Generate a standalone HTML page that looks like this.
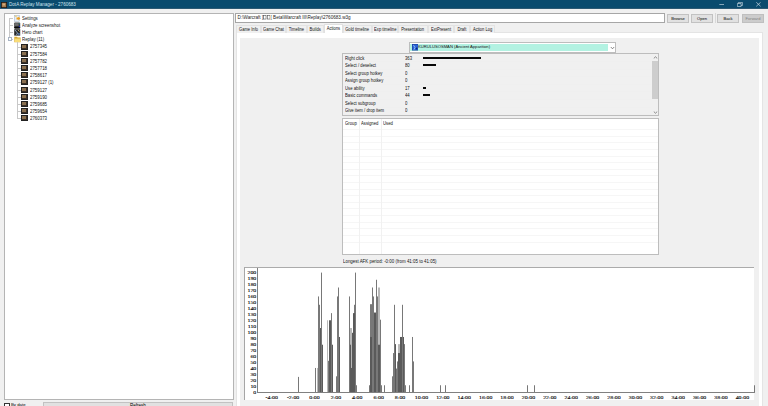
<!DOCTYPE html>
<html><head><meta charset="utf-8">
<style>
*{box-sizing:border-box;margin:0;padding:0}
html,body{width:768px;height:406px;overflow:hidden;background:#f0f0f0;font-family:"Liberation Sans",sans-serif;font-size:4.3px;color:#000;position:relative}
.a{position:absolute}
#title{left:0;top:0;width:768px;height:8px;background:#0a4b6e;color:#cfe3ef}
#tree{left:4px;top:13px;width:230px;height:387px;background:#fff;border:1px solid #b4b4b4}
.ti{position:absolute;white-space:nowrap;line-height:6px;height:6px;font-size:4.5px;color:#111;transform:scaleX(0.97);transform-origin:0 0}
.btn{position:absolute;background:#e1e1e1;border:1px solid #c2c2c2;text-align:center;line-height:7px;font-size:4.1px}
.tab{position:absolute;top:25px;height:8px;background:#f0f0f0;border:1px solid #e3e3e3;border-bottom:none;text-align:center;line-height:7px;font-size:4.5px;white-space:nowrap;color:#111}
.tab span{display:inline-block;transform:scaleX(0.91)}
.lrow{position:absolute;white-space:nowrap;line-height:6px;height:6px;font-size:4.5px;color:#111;transform:scaleX(0.94);transform-origin:0 0}
svg text{font-family:"Liberation Serif",serif;font-size:5.9px;fill:#000;stroke:#000;stroke-width:0.12px}
</style></head><body>
<div id="title" class="a">
  <div class="a" style="left:0;top:8px;width:768px;height:1px;background:#0b3f5e;opacity:0.85"></div>
  <svg class="a" style="left:1px;top:1.5px" width="6" height="6" viewBox="0 0 6 6"><rect x="0" y="0" width="6" height="6" fill="#1e1a14"/><rect x="0.8" y="0.8" width="4.4" height="4.4" fill="#a07a50"/><rect x="1.5" y="1.5" width="2.5" height="2" fill="#d0a878"/></svg>
  <div class="a" style="left:9px;top:1.2px;font-size:4.6px;line-height:7px;white-space:nowrap">DotA Replay Manager - 2760683</div>
  <svg class="a" style="left:719px;top:3px" width="6" height="3" viewBox="0 0 6 3"><path d="M0.3 1.5H5" stroke="#d8e4ec" stroke-width="0.6"/></svg>
  <svg class="a" style="left:736.5px;top:1.8px" width="6" height="5" viewBox="0 0 6 5"><path d="M0.4 1.5H4.1V4.5H0.4Z M1.4 1.5V0.4H5.4V3.5H4.1" stroke="#d8e4ec" stroke-width="0.6" fill="none"/></svg>
  <svg class="a" style="left:755.5px;top:1.8px" width="5" height="5" viewBox="0 0 5 5"><path d="M0.3 0.3L4.6 4.3M4.6 0.3L0.3 4.3" stroke="#d8e4ec" stroke-width="0.65"/></svg>
</div>

<div id="tree" class="a"></div>
<svg class="a" style="left:14px;top:15px" width="7" height="7" viewBox="0 0 7 7"><rect x="0.3" y="0.3" width="5" height="6.2" fill="#e4eef8" stroke="#9fb0c4" stroke-width="0.5"/><rect x="0.8" y="0.6" width="2" height="1.2" fill="#f0d070"/><path d="M2.5 2.6H4.3V1.6L6.4 3.6L4.3 5.6V4.6H2.5Z" fill="#eea020"/></svg>
<div class="ti" style="left:22px;top:15.7px">Settings</div>
<div class="a" style="left:9px;top:17.9px;width:4px;height:0;background:#c8c8c8;height:1px;border:none"></div>
<svg class="a" style="left:14px;top:22px" width="7" height="7" viewBox="0 0 7 7"><rect x="0.2" y="0.6" width="6" height="5.8" rx="0.8" fill="#3c3c3c"/><rect x="0.8" y="1.2" width="3.8" height="2.6" fill="#707070"/><rect x="0.2" y="4.8" width="6" height="1.6" rx="0.6" fill="#050505"/><rect x="4.8" y="1.2" width="1" height="1" fill="#2a8a8a"/><rect x="4.8" y="3.8" width="1.2" height="1.4" fill="#2030b0"/></svg>
<div class="ti" style="left:22px;top:22.8px">Analyze screenshot</div>
<div class="a" style="left:9px;top:25.0px;width:4px;height:0;background:#c8c8c8;height:1px;border:none"></div>
<svg class="a" style="left:14px;top:29px" width="7" height="7" viewBox="0 0 7 7"><rect x="0.2" y="0.2" width="6" height="6.4" fill="#2a2a2a"/><path d="M1 1L3.5 4L2.5 6" stroke="#9ab0c8" stroke-width="0.9" fill="none"/><path d="M4 1L5.5 2.5" stroke="#d8c070" stroke-width="0.8"/><rect x="4" y="4" width="1.8" height="2" fill="#4a6a9a"/></svg>
<div class="ti" style="left:22px;top:29.9px">Hero chart</div>
<div class="a" style="left:9px;top:32.1px;width:4px;height:0;background:#c8c8c8;height:1px;border:none"></div>
<svg class="a" style="left:14px;top:36px" width="8" height="7" viewBox="0 0 8 7"><path d="M0.3 0.8H3L3.6 1.5H6.6V6.2H0.3Z" fill="#d8a830"/><path d="M0.6 2.4H6.8L6.3 6H0.6Z" fill="#f8dc78"/></svg>
<div class="ti" style="left:22px;top:37.0px">Replay (11)</div>
<div class="a" style="left:9px;top:39.2px;width:4px;height:0;background:#c8c8c8;height:1px;border:none"></div>
<div class="a" style="left:9px;top:18px;width:0;height:21px;background:#c8c8c8;width:1px;border:none"></div>
<div class="a" style="left:8px;top:37px;width:4px;height:4px;background:#fff;border:1px solid #a8b4c4"></div>
<div class="a" style="left:21px;top:44px;width:7px;height:6px;background:#3b3026;border:1px solid #222"></div><div class="a" style="left:22px;top:45px;width:4px;height:3px;background:#8a7050"></div>
<div class="ti" style="left:29.7px;top:44.4px">2757345</div>
<div class="a" style="left:17px;top:46.5px;width:4px;height:0;background:#c8c8c8;height:1px;border:none"></div>
<div class="a" style="left:21px;top:51px;width:7px;height:6px;background:#3b3026;border:1px solid #222"></div><div class="a" style="left:22px;top:52px;width:4px;height:3px;background:#8a7050"></div>
<div class="ti" style="left:29.7px;top:51.6px">2757584</div>
<div class="a" style="left:17px;top:53.7px;width:4px;height:0;background:#c8c8c8;height:1px;border:none"></div>
<div class="a" style="left:21px;top:58px;width:7px;height:6px;background:#3b3026;border:1px solid #222"></div><div class="a" style="left:22px;top:59px;width:4px;height:3px;background:#8a7050"></div>
<div class="ti" style="left:29.7px;top:58.8px">2757782</div>
<div class="a" style="left:17px;top:60.9px;width:4px;height:0;background:#c8c8c8;height:1px;border:none"></div>
<div class="a" style="left:21px;top:65px;width:7px;height:6px;background:#3b3026;border:1px solid #222"></div><div class="a" style="left:22px;top:66px;width:4px;height:3px;background:#8a7050"></div>
<div class="ti" style="left:29.7px;top:65.9px">2757718</div>
<div class="a" style="left:17px;top:68.0px;width:4px;height:0;background:#c8c8c8;height:1px;border:none"></div>
<div class="a" style="left:21px;top:72px;width:7px;height:6px;background:#3b3026;border:1px solid #222"></div><div class="a" style="left:22px;top:73px;width:4px;height:3px;background:#8a7050"></div>
<div class="ti" style="left:29.7px;top:73.1px">2758617</div>
<div class="a" style="left:17px;top:75.2px;width:4px;height:0;background:#c8c8c8;height:1px;border:none"></div>
<div class="a" style="left:21px;top:79px;width:7px;height:6px;background:#3b3026;border:1px solid #222"></div><div class="a" style="left:22px;top:80px;width:4px;height:3px;background:#8a7050"></div>
<div class="ti" style="left:29.7px;top:80.3px">2759127 (1)</div>
<div class="a" style="left:17px;top:82.4px;width:4px;height:0;background:#c8c8c8;height:1px;border:none"></div>
<div class="a" style="left:21px;top:87px;width:7px;height:6px;background:#3b3026;border:1px solid #222"></div><div class="a" style="left:22px;top:88px;width:4px;height:3px;background:#8a7050"></div>
<div class="ti" style="left:29.7px;top:87.5px">2759127</div>
<div class="a" style="left:17px;top:89.6px;width:4px;height:0;background:#c8c8c8;height:1px;border:none"></div>
<div class="a" style="left:21px;top:94px;width:7px;height:6px;background:#3b3026;border:1px solid #222"></div><div class="a" style="left:22px;top:95px;width:4px;height:3px;background:#8a7050"></div>
<div class="ti" style="left:29.7px;top:94.7px">2759190</div>
<div class="a" style="left:17px;top:96.8px;width:4px;height:0;background:#c8c8c8;height:1px;border:none"></div>
<div class="a" style="left:21px;top:101px;width:7px;height:6px;background:#3b3026;border:1px solid #222"></div><div class="a" style="left:22px;top:102px;width:4px;height:3px;background:#8a7050"></div>
<div class="ti" style="left:29.7px;top:101.8px">2759685</div>
<div class="a" style="left:17px;top:103.9px;width:4px;height:0;background:#c8c8c8;height:1px;border:none"></div>
<div class="a" style="left:21px;top:108px;width:7px;height:6px;background:#3b3026;border:1px solid #222"></div><div class="a" style="left:22px;top:109px;width:4px;height:3px;background:#8a7050"></div>
<div class="ti" style="left:29.7px;top:109.0px">2759654</div>
<div class="a" style="left:17px;top:111.1px;width:4px;height:0;background:#c8c8c8;height:1px;border:none"></div>
<div class="a" style="left:21px;top:115px;width:7px;height:6px;background:#3b3026;border:1px solid #222"></div><div class="a" style="left:22px;top:116px;width:4px;height:3px;background:#8a7050"></div>
<div class="ti" style="left:29.7px;top:116.2px">2760373</div>
<div class="a" style="left:17px;top:118.3px;width:4px;height:0;background:#c8c8c8;height:1px;border:none"></div>
<div class="a" style="left:17px;top:42px;width:0;height:76.3px;background:#c8c8c8;width:1px;border:none"></div>

<!-- address bar + buttons -->
<div class="a" style="left:235px;top:13px;width:430px;height:10px;background:#fff;border:1px solid #a6a6a6"></div>
<div class="a" style="left:237.6px;top:15px;font-size:4.6px;line-height:6px;white-space:nowrap;color:#222">D:\Warcraft ]<svg width="3.4" height="4.4" viewBox="0 0 3.4 4.4" style="vertical-align:-0.5px;margin:0 0.15px"><rect x="0.35" y="0.35" width="2.7" height="3.7" fill="none" stroke="#444" stroke-width="0.55"/></svg><svg width="3.4" height="4.4" viewBox="0 0 3.4 4.4" style="vertical-align:-0.5px;margin:0 0.15px"><rect x="0.35" y="0.35" width="2.7" height="3.7" fill="none" stroke="#444" stroke-width="0.55"/></svg>[ Beta\Warcraft III\Replay\2760683.w3g</div>
<div class="btn" style="left:667px;top:14px;width:22px;height:9px">Browse</div>
<div class="btn" style="left:691px;top:14px;width:22px;height:9px">Open</div>
<div class="a" style="left:715px;top:13px;width:1px;height:10px;background:#d8d8d8"></div>
<div class="btn" style="left:717px;top:14px;width:22px;height:9px">Back</div>
<div class="btn" style="left:742px;top:14px;width:22px;height:9px;background:#cccccc;border-color:#bfbfbf;color:#838383">Forward</div>

<!-- tab page -->
<div class="a" style="left:236px;top:32px;width:527px;height:380px;background:#fff;border:1px solid #e4e4e4"></div>
<div class="tab" style="left:236px;width:25px"><span>Game Info</span></div>
<div class="tab" style="left:261px;width:25px"><span>Game Chat</span></div>
<div class="tab" style="left:286px;width:21px"><span>Timeline</span></div>
<div class="tab" style="left:307px;width:17px"><span>Builds</span></div>
<div class="tab" style="left:324px;top:24px;width:19px;height:9px;background:#fff;border-color:#e0e0e0"><span>Actions</span></div>
<div class="tab" style="left:343px;width:29px"><span>Gold timeline</span></div>
<div class="tab" style="left:372px;width:26px"><span>Exp timeline</span></div>
<div class="tab" style="left:398px;width:30px"><span>Presentation</span></div>
<div class="tab" style="left:428px;width:26px"><span>ExtPresent</span></div>
<div class="tab" style="left:454px;width:16px"><span>Draft</span></div>
<div class="tab" style="left:470px;width:25px"><span>Action Log</span></div>

<div class="a" style="left:240px;top:38px;width:519px;height:370px;background:#f0f0f0"></div>

<!-- combobox -->
<div class="a" style="left:409px;top:42px;width:207px;height:10.5px;background:#fff;border:1px solid #bdbdbd"></div>
<div class="a" style="left:410px;top:43.5px;width:198px;height:7.5px;background:#b3f2e2"></div>
<svg class="a" style="left:411.5px;top:44px" width="6.5" height="6.5" viewBox="0 0 6.5 6.5"><rect x="0" y="0" width="6.5" height="6.5" fill="#1c3c9c"/><rect x="0.6" y="0.6" width="5.3" height="5.3" fill="#2a64d8"/><path d="M1.5 1.2L3 3.5L2 5.6" stroke="#a8d0f8" stroke-width="0.8" fill="none"/><rect x="3.8" y="3.6" width="1.6" height="1.8" fill="#0c2a80"/></svg>
<div class="a" style="left:418.4px;top:44.4px;font-size:4.4px;line-height:6px;white-space:nowrap;color:#111;transform:scaleX(0.94);transform-origin:0 0">KURULUSOSMAN (Ancient Apparition)</div>
<svg class="a" style="left:610px;top:46px" width="5" height="4" viewBox="0 0 5 4"><path d="M0.8 1L2.5 2.8L4.2 1" stroke="#555" stroke-width="0.7" fill="none"/></svg>

<!-- list box -->
<div class="a" style="left:342px;top:53px;width:317px;height:63px;background:#f0f0f0;border:1px solid #bdbdbd"></div>
<div class="a" style="left:343px;top:61.3px;width:308px;height:1px;background:#efefef"></div>
<div class="a" style="left:343px;top:68.8px;width:308px;height:1px;background:#efefef"></div>
<div class="a" style="left:343px;top:76.4px;width:308px;height:1px;background:#efefef"></div>
<div class="a" style="left:343px;top:83.9px;width:308px;height:1px;background:#efefef"></div>
<div class="a" style="left:343px;top:91.4px;width:308px;height:1px;background:#efefef"></div>
<div class="a" style="left:343px;top:98.9px;width:308px;height:1px;background:#efefef"></div>
<div class="a" style="left:343px;top:106.5px;width:308px;height:1px;background:#efefef"></div>
<div class="a" style="left:343px;top:114.0px;width:308px;height:1px;background:#efefef"></div>
<div class="lrow" style="left:345px;top:55.6px">Right click</div>
<div class="lrow" style="left:404.7px;top:55.6px">363</div>
<div class="a" style="left:423.3px;top:57px;width:57.9px;height:2px;background:#080808"></div>
<div class="lrow" style="left:345px;top:63.1px">Select / deselect</div>
<div class="lrow" style="left:404.7px;top:63.1px">80</div>
<div class="a" style="left:423.3px;top:64px;width:12.8px;height:2px;background:#080808"></div>
<div class="lrow" style="left:345px;top:70.7px">Select group hotkey</div>
<div class="lrow" style="left:404.7px;top:70.7px">0</div>
<div class="lrow" style="left:345px;top:78.2px">Assign group hotkey</div>
<div class="lrow" style="left:404.7px;top:78.2px">0</div>
<div class="lrow" style="left:345px;top:85.7px">Use ability</div>
<div class="lrow" style="left:404.7px;top:85.7px">17</div>
<div class="a" style="left:423.3px;top:87px;width:2.7px;height:2px;background:#080808"></div>
<div class="lrow" style="left:345px;top:93.2px">Basic commands</div>
<div class="lrow" style="left:404.7px;top:93.2px">44</div>
<div class="a" style="left:423.3px;top:94px;width:7.0px;height:2px;background:#080808"></div>
<div class="lrow" style="left:345px;top:100.8px">Select subgroup</div>
<div class="lrow" style="left:404.7px;top:100.8px">0</div>
<div class="lrow" style="left:345px;top:108.3px">Give item / drop item</div>
<div class="lrow" style="left:404.7px;top:108.3px">0</div>
<div class="a" style="left:651.5px;top:54px;width:6.5px;height:61px;background:#f0f0f0"></div>
<div class="a" style="left:652px;top:60.7px;width:5.8px;height:38px;background:#cdcdcd"></div>
<svg class="a" style="left:652.5px;top:56px" width="5" height="3" viewBox="0 0 5 3"><path d="M0.8 2.4L2.5 0.8L4.2 2.4" stroke="#606060" stroke-width="0.7" fill="none"/></svg>
<svg class="a" style="left:652.5px;top:111px" width="5" height="3" viewBox="0 0 5 3"><path d="M0.8 0.6L2.5 2.2L4.2 0.6" stroke="#606060" stroke-width="0.7" fill="none"/></svg>

<!-- group panel -->
<div class="a" style="left:342px;top:118px;width:317px;height:137px;background:#fff;border:1px solid #bdbdbd"></div>
<div class="a" style="left:343px;top:129.0px;width:315px;height:1px;background:#f6f6f6"></div>
<div class="a" style="left:343px;top:135.6px;width:315px;height:1px;background:#f6f6f6"></div>
<div class="a" style="left:343px;top:142.2px;width:315px;height:1px;background:#f6f6f6"></div>
<div class="a" style="left:343px;top:148.9px;width:315px;height:1px;background:#f6f6f6"></div>
<div class="a" style="left:343px;top:155.5px;width:315px;height:1px;background:#f6f6f6"></div>
<div class="a" style="left:343px;top:162.1px;width:315px;height:1px;background:#f6f6f6"></div>
<div class="a" style="left:343px;top:168.7px;width:315px;height:1px;background:#f6f6f6"></div>
<div class="a" style="left:343px;top:175.3px;width:315px;height:1px;background:#f6f6f6"></div>
<div class="a" style="left:343px;top:182.0px;width:315px;height:1px;background:#f6f6f6"></div>
<div class="a" style="left:343px;top:188.6px;width:315px;height:1px;background:#f6f6f6"></div>
<div class="a" style="left:343px;top:195.2px;width:315px;height:1px;background:#f6f6f6"></div>
<div class="a" style="left:343px;top:201.8px;width:315px;height:1px;background:#f6f6f6"></div>
<div class="a" style="left:343px;top:208.4px;width:315px;height:1px;background:#f6f6f6"></div>
<div class="a" style="left:343px;top:215.1px;width:315px;height:1px;background:#f6f6f6"></div>
<div class="a" style="left:343px;top:221.7px;width:315px;height:1px;background:#f6f6f6"></div>
<div class="a" style="left:343px;top:228.3px;width:315px;height:1px;background:#f6f6f6"></div>
<div class="a" style="left:343px;top:234.9px;width:315px;height:1px;background:#f6f6f6"></div>
<div class="a" style="left:343px;top:241.5px;width:315px;height:1px;background:#f6f6f6"></div>
<div class="a" style="left:359px;top:119px;width:1px;height:135px;background:#f1f1f1"></div>
<div class="a" style="left:381px;top:119px;width:1px;height:135px;background:#f1f1f1"></div>
<div class="lrow" style="left:345px;top:121.3px">Group</div>
<div class="lrow" style="left:361.2px;top:121.3px">Assigned</div>
<div class="lrow" style="left:382.9px;top:121.3px">Used</div>
<div class="a" style="left:343px;top:258.9px;font-size:4.7px;line-height:6px;white-space:nowrap;color:#111;transform:scaleX(0.94);transform-origin:0 0">Longest AFK period: -0:00 (from 41:05 to 41:05)</div>

<!-- chart -->
<div class="a" style="left:244px;top:267px;width:510px;height:133px;background:#fff;border-top:1px solid #ababab;border-left:1px solid #a6a6a6"></div>
<svg class="a" style="left:0;top:0" width="768" height="406" viewBox="0 0 768 406">
<rect x="298" y="376.90" width="1" height="15.50" fill="#787878"/>
<rect x="315" y="367.96" width="1" height="24.44" fill="#787878"/>
<rect x="317" y="367.96" width="1" height="24.44" fill="#b8b8b8"/>
<rect x="318" y="296.44" width="1" height="95.96" fill="#787878"/>
<rect x="319" y="304.79" width="1" height="87.61" fill="#787878"/>
<rect x="320" y="328.03" width="1" height="64.37" fill="#5a5a5a"/>
<rect x="321" y="272.60" width="1" height="119.80" fill="#787878"/>
<rect x="322" y="344.72" width="1" height="47.68" fill="#5a5a5a"/>
<rect x="327" y="320.28" width="1" height="72.12" fill="#b8b8b8"/>
<rect x="328" y="360.81" width="1" height="31.59" fill="#787878"/>
<rect x="329" y="320.28" width="1" height="72.12" fill="#5a5a5a"/>
<rect x="330" y="320.28" width="1" height="72.12" fill="#5a5a5a"/>
<rect x="331" y="313.13" width="1" height="79.27" fill="#787878"/>
<rect x="332" y="344.72" width="1" height="47.68" fill="#5a5a5a"/>
<rect x="336" y="376.31" width="1" height="16.09" fill="#787878"/>
<rect x="337" y="296.44" width="1" height="95.96" fill="#787878"/>
<rect x="338" y="287.50" width="1" height="104.90" fill="#787878"/>
<rect x="339" y="336.97" width="1" height="55.43" fill="#5a5a5a"/>
<rect x="349" y="296.44" width="1" height="95.96" fill="#787878"/>
<rect x="350" y="328.03" width="1" height="64.37" fill="#b8b8b8"/>
<rect x="350" y="344.72" width="1" height="47.68" fill="#5a5a5a"/>
<rect x="351" y="328.03" width="1" height="64.37" fill="#b8b8b8"/>
<rect x="351" y="367.96" width="1" height="24.44" fill="#5a5a5a"/>
<rect x="352" y="332.80" width="1" height="59.60" fill="#5a5a5a"/>
<rect x="353" y="313.13" width="1" height="79.27" fill="#5a5a5a"/>
<rect x="354" y="304.79" width="1" height="87.61" fill="#787878"/>
<rect x="354" y="313.13" width="1" height="79.27" fill="#5a5a5a"/>
<rect x="355" y="272.60" width="1" height="119.80" fill="#787878"/>
<rect x="356" y="385.25" width="1" height="7.15" fill="#787878"/>
<rect x="369" y="385.25" width="1" height="7.15" fill="#787878"/>
<rect x="370" y="304.19" width="1" height="88.21" fill="#787878"/>
<rect x="370" y="336.97" width="1" height="55.43" fill="#5a5a5a"/>
<rect x="371" y="304.19" width="1" height="88.21" fill="#787878"/>
<rect x="371" y="336.97" width="1" height="55.43" fill="#5a5a5a"/>
<rect x="372" y="287.50" width="1" height="104.90" fill="#787878"/>
<rect x="373" y="296.44" width="1" height="95.96" fill="#787878"/>
<rect x="374" y="312.54" width="1" height="79.86" fill="#5a5a5a"/>
<rect x="375" y="312.54" width="1" height="79.86" fill="#5a5a5a"/>
<rect x="376" y="279.76" width="1" height="112.64" fill="#787878"/>
<rect x="377" y="296.44" width="1" height="95.96" fill="#787878"/>
<rect x="378" y="287.50" width="1" height="104.90" fill="#b8b8b8"/>
<rect x="378" y="344.72" width="1" height="47.68" fill="#5a5a5a"/>
<rect x="379" y="287.50" width="1" height="104.90" fill="#b8b8b8"/>
<rect x="379" y="344.72" width="1" height="47.68" fill="#5a5a5a"/>
<rect x="380" y="319.69" width="1" height="72.71" fill="#787878"/>
<rect x="381" y="385.25" width="1" height="7.15" fill="#787878"/>
<rect x="384" y="385.25" width="1" height="7.15" fill="#787878"/>
<rect x="392" y="376.31" width="1" height="16.09" fill="#787878"/>
<rect x="393" y="353.06" width="1" height="39.34" fill="#787878"/>
<rect x="394" y="304.79" width="1" height="87.61" fill="#787878"/>
<rect x="395" y="344.12" width="1" height="48.28" fill="#5a5a5a"/>
<rect x="396" y="368.56" width="1" height="23.84" fill="#787878"/>
<rect x="397" y="361.41" width="1" height="30.99" fill="#787878"/>
<rect x="398" y="344.12" width="1" height="48.28" fill="#b8b8b8"/>
<rect x="398" y="353.06" width="1" height="39.34" fill="#5a5a5a"/>
<rect x="399" y="344.12" width="1" height="48.28" fill="#b8b8b8"/>
<rect x="399" y="353.06" width="1" height="39.34" fill="#5a5a5a"/>
<rect x="400" y="336.97" width="1" height="55.43" fill="#5a5a5a"/>
<rect x="401" y="336.97" width="1" height="55.43" fill="#5a5a5a"/>
<rect x="402" y="304.79" width="1" height="87.61" fill="#787878"/>
<rect x="403" y="336.97" width="1" height="55.43" fill="#5a5a5a"/>
<rect x="404" y="344.12" width="1" height="48.28" fill="#787878"/>
<rect x="405" y="385.25" width="1" height="7.15" fill="#787878"/>
<rect x="409" y="385.25" width="1" height="7.15" fill="#787878"/>
<rect x="412" y="336.97" width="1" height="55.43" fill="#787878"/>
<rect x="413" y="361.41" width="1" height="30.99" fill="#787878"/>
<rect x="440" y="385.25" width="1" height="7.15" fill="#787878"/>
<rect x="445" y="385.25" width="1" height="7.15" fill="#787878"/>
<rect x="527" y="385.25" width="1" height="7.15" fill="#787878"/>
<rect x="534" y="385.25" width="1" height="7.15" fill="#787878"/>
<rect x="754" y="385.25" width="1" height="7.15" fill="#787878"/>
<rect x="257" y="268" width="1" height="125" fill="#808080"/>
<rect x="257" y="392" width="498" height="1" fill="#808080"/>
<text transform="translate(256.3,273.60) scale(1,0.72)" text-anchor="end">200</text>
<text transform="translate(256.3,279.60) scale(1,0.72)" text-anchor="end">190</text>
<text transform="translate(256.3,285.60) scale(1,0.72)" text-anchor="end">180</text>
<text transform="translate(256.3,291.60) scale(1,0.72)" text-anchor="end">170</text>
<text transform="translate(256.3,297.60) scale(1,0.72)" text-anchor="end">160</text>
<text transform="translate(256.3,303.60) scale(1,0.72)" text-anchor="end">150</text>
<text transform="translate(256.3,309.60) scale(1,0.72)" text-anchor="end">140</text>
<text transform="translate(256.3,315.60) scale(1,0.72)" text-anchor="end">130</text>
<text transform="translate(256.3,321.60) scale(1,0.72)" text-anchor="end">120</text>
<text transform="translate(256.3,327.60) scale(1,0.72)" text-anchor="end">110</text>
<text transform="translate(256.3,333.60) scale(1,0.72)" text-anchor="end">100</text>
<text transform="translate(256.3,339.60) scale(1,0.72)" text-anchor="end">90</text>
<text transform="translate(256.3,345.60) scale(1,0.72)" text-anchor="end">80</text>
<text transform="translate(256.3,351.60) scale(1,0.72)" text-anchor="end">70</text>
<text transform="translate(256.3,357.60) scale(1,0.72)" text-anchor="end">60</text>
<text transform="translate(256.3,363.60) scale(1,0.72)" text-anchor="end">50</text>
<text transform="translate(256.3,369.60) scale(1,0.72)" text-anchor="end">40</text>
<text transform="translate(256.3,375.60) scale(1,0.72)" text-anchor="end">30</text>
<text transform="translate(256.3,381.60) scale(1,0.72)" text-anchor="end">20</text>
<text transform="translate(256.3,387.60) scale(1,0.72)" text-anchor="end">10</text>
<text transform="translate(256.3,393.60) scale(1,0.72)" text-anchor="end">0</text>
<text transform="translate(271.70,398.6) scale(1,0.72)" text-anchor="middle">-4:00</text>
<text transform="translate(293.09,398.6) scale(1,0.72)" text-anchor="middle">-2:00</text>
<text transform="translate(314.49,398.6) scale(1,0.72)" text-anchor="middle">0:00</text>
<text transform="translate(335.88,398.6) scale(1,0.72)" text-anchor="middle">2:00</text>
<text transform="translate(357.28,398.6) scale(1,0.72)" text-anchor="middle">4:00</text>
<text transform="translate(378.67,398.6) scale(1,0.72)" text-anchor="middle">6:00</text>
<text transform="translate(400.07,398.6) scale(1,0.72)" text-anchor="middle">8:00</text>
<text transform="translate(421.46,398.6) scale(1,0.72)" text-anchor="middle">10:00</text>
<text transform="translate(442.86,398.6) scale(1,0.72)" text-anchor="middle">12:00</text>
<text transform="translate(464.25,398.6) scale(1,0.72)" text-anchor="middle">14:00</text>
<text transform="translate(485.65,398.6) scale(1,0.72)" text-anchor="middle">16:00</text>
<text transform="translate(507.04,398.6) scale(1,0.72)" text-anchor="middle">18:00</text>
<text transform="translate(528.44,398.6) scale(1,0.72)" text-anchor="middle">20:00</text>
<text transform="translate(549.84,398.6) scale(1,0.72)" text-anchor="middle">22:00</text>
<text transform="translate(571.23,398.6) scale(1,0.72)" text-anchor="middle">24:00</text>
<text transform="translate(592.62,398.6) scale(1,0.72)" text-anchor="middle">26:00</text>
<text transform="translate(614.02,398.6) scale(1,0.72)" text-anchor="middle">28:00</text>
<text transform="translate(635.41,398.6) scale(1,0.72)" text-anchor="middle">30:00</text>
<text transform="translate(656.81,398.6) scale(1,0.72)" text-anchor="middle">32:00</text>
<text transform="translate(678.20,398.6) scale(1,0.72)" text-anchor="middle">34:00</text>
<text transform="translate(699.60,398.6) scale(1,0.72)" text-anchor="middle">36:00</text>
<text transform="translate(721.00,398.6) scale(1,0.72)" text-anchor="middle">38:00</text>
<text transform="translate(742.39,398.6) scale(1,0.72)" text-anchor="middle">40:00</text>
</svg>

<!-- bottom left -->
<div class="a" style="left:4px;top:403px;width:6px;height:6px;background:#fff;border:1px solid #333"></div>
<div class="a" style="left:11px;top:402.3px;font-size:4.3px;line-height:6px;white-space:nowrap">By date</div>
<div class="btn" style="left:43px;top:402px;width:190px;height:9px;line-height:5.2px;font-size:4.5px">Refresh</div>
</body></html>
